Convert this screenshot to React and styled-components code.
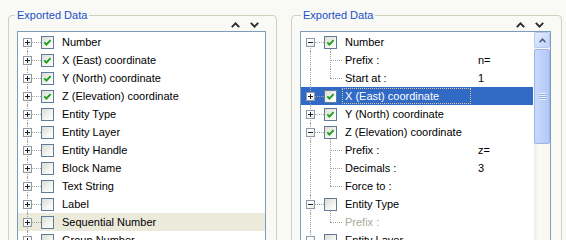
import React from "react";
import styled, { createGlobalStyle } from "styled-components";

// left list: flat, nothing expanded
const leftRows = [
  { label: "Number", checked: true },
  { label: "X (East) coordinate", checked: true },
  { label: "Y (North) coordinate", checked: true },
  { label: "Z (Elevation) coordinate", checked: true },
  { label: "Entity Type" },
  { label: "Entity Layer" },
  { label: "Entity Handle" },
  { label: "Block Name" },
  { label: "Text String" },
  { label: "Label" },
  { label: "Sequential Number", hover: true },
  { label: "Group Number" },
];

// right list: some items opened to show their settings
const rightRows = [
  {
    label: "Number",
    checked: true,
    open: true,
    children: [
      { label: "Prefix :", value: "n=" },
      { label: "Start at :", value: "1" },
    ],
  },
  { label: "X (East) coordinate", checked: true, selected: true },
  { label: "Y (North) coordinate", checked: true },
  {
    label: "Z (Elevation) coordinate",
    checked: true,
    open: true,
    children: [
      { label: "Prefix :", value: "z=" },
      { label: "Decimals :", value: "3" },
      { label: "Force to :", value: "" },
    ],
  },
  {
    label: "Entity Type",
    open: true,
    children: [{ label: "Prefix :", value: "", muted: true }],
  },
  {
    label: "Entity Layer",
    open: true,
    children: [{ label: "Prefix :", value: "", muted: true }],
  },
];

function Chevron({ up }) {
  return (
    <svg width="9" height="6" viewBox="0 0 9 6">
      <polyline
        points={up ? "0.8,5.2 4.5,1.4 8.2,5.2" : "0.8,0.8 4.5,4.6 8.2,0.8"}
        fill="none"
        stroke="#2b2b2b"
        strokeWidth="1.9"
      />
    </svg>
  );
}

function CheckMark() {
  return (
    <svg width="9" height="9" viewBox="0 0 9 9">
      <polyline
        points="1.3,4.3 3.4,6.5 7.6,2.1"
        fill="none"
        stroke="#21a121"
        strokeWidth="1.9"
      />
    </svg>
  );
}

function RootRow({ item, first }) {
  return (
    <Row $selected={item.selected} $hover={item.hover}>
      <Gutter $first={first}>
        <Expander $open={item.open} />
      </Gutter>
      <Check $stem={item.open}>{item.checked && <CheckMark />}</Check>
      <Label $focus={item.selected}>{item.label}</Label>
    </Row>
  );
}

function ChildRow({ item, last }) {
  return (
    <Row $muted={item.muted}>
      <Gutter $pass />
      <SubGutter $last={last} />
      <Label $width={133}>{item.label}</Label>
      <Value>{item.value}</Value>
    </Row>
  );
}

export default function App() {
  return (
    <>
      <GlobalStyle />
      <Page>
        <GroupBox>
          <Legend $shift={-2}>Exported Data</Legend>
          <Arrows>
            <Chevron up />
            <Chevron />
          </Arrows>
          <Tree>
            <Rows>
              {leftRows.map((item, i) => (
                <RootRow key={item.label} item={item} first={i === 0} />
              ))}
            </Rows>
          </Tree>
        </GroupBox>

        <GroupBox>
          <Legend $shift={1}>Exported Data</Legend>
          <Arrows>
            <Chevron up />
            <Chevron />
          </Arrows>
          <Tree>
            <Rows>
              {rightRows.map((item, i) => (
                <React.Fragment key={item.label}>
                  <RootRow item={item} first={i === 0} />
                  {item.open &&
                    item.children.map((c, j) => (
                      <ChildRow
                        key={c.label + j}
                        item={c}
                        last={j === item.children.length - 1}
                      />
                    ))}
                </React.Fragment>
              ))}
            </Rows>
            <ScrollBar>
              <ScrollButton>
                <svg width="7" height="5" viewBox="0 0 7 5">
                  <polyline
                    points="0.6,4.2 3.5,1.2 6.4,4.2"
                    fill="none"
                    stroke="#4d6185"
                    strokeWidth="1.6"
                  />
                </svg>
              </ScrollButton>
              <Thumb>
                <Grip />
              </Thumb>
            </ScrollBar>
          </Tree>
        </GroupBox>
      </Page>
    </>
  );
}

const GlobalStyle = createGlobalStyle`
  html, body {
    margin: 0;
    padding: 0;
    background: #f9f9f6;
  }
  body {
    font-family: "Liberation Sans", Arial, sans-serif;
    font-size: 11px;
    color: #000;
  }
`;

const Page = styled.div`
  display: grid;
  grid-template-columns: 269px 271px;
  column-gap: 14px;
  padding: 8px 0 0 8px;
  height: 240px;
  box-sizing: border-box;
  overflow: hidden;
`;

const GroupBox = styled.fieldset`
  margin: 0;
  min-width: 0;
  height: 270px;
  padding: 0 10px 0 8px;
  border: 1px solid #d0d0bf;
  border-radius: 4px;
`;

const Legend = styled.legend`
  margin-left: ${(p) => p.$shift}px;
  padding: 0 2px;
  line-height: 14px;
  font-size: 11px;
  color: #1850c8;
`;

const Arrows = styled.div`
  display: flex;
  justify-content: flex-end;
  align-items: flex-start;
  gap: 10px;
  height: 9px;
  padding-right: 7px;
`;

const Tree = styled.div`
  display: flex;
  height: 230px;
  border: 1px solid #7f9db9;
  background: #fff;
`;

const Rows = styled.div`
  flex: 1;
  min-width: 0;
  padding-top: 1px;
`;

const Row = styled.div`
  display: flex;
  align-items: center;
  height: 18px;
  white-space: nowrap;
  background: ${(p) =>
    p.$selected ? "#316ac5" : p.$hover ? "#ebeadb" : "transparent"};
  color: ${(p) => (p.$selected ? "#fff" : p.$muted ? "#aca899" : "#000")};
`;

// column holding the +/- box and the dotted lines joining root items
const Gutter = styled.div`
  position: relative;
  align-self: stretch;
  flex: 0 0 23px;
  display: flex;
  align-items: center;
  padding-left: 5px;
  box-sizing: border-box;
  &::before {
    content: "";
    position: absolute;
    left: 9px;
    top: ${(p) => (p.$first ? "9px" : "0")};
    bottom: 0;
    border-left: 1px dotted #a3a3a3;
  }
  &::after {
    content: "";
    display: ${(p) => (p.$pass ? "none" : "block")};
    position: absolute;
    left: 9px;
    right: 0;
    top: 9px;
    border-top: 1px dotted #a3a3a3;
  }
`;

const SubGutter = styled.div`
  position: relative;
  align-self: stretch;
  flex: 0 0 21px;
  &::before {
    content: "";
    position: absolute;
    left: 6px;
    top: 0;
    height: ${(p) => (p.$last ? "9px" : "18px")};
    border-left: 1px dotted #a3a3a3;
  }
  &::after {
    content: "";
    position: absolute;
    left: 6px;
    right: 3px;
    top: 9px;
    border-top: 1px dotted #a3a3a3;
  }
`;

const Expander = styled.span`
  position: relative;
  z-index: 1;
  width: 9px;
  height: 9px;
  box-sizing: border-box;
  border: 1px solid #8c9aa9;
  background: linear-gradient(135deg, #ffffff 40%, #e6e6de);
  &::before {
    content: "";
    position: absolute;
    left: 1px;
    top: 3px;
    width: 5px;
    height: 1px;
    background: #1e1e1e;
  }
  &::after {
    content: "";
    display: ${(p) => (p.$open ? "none" : "block")};
    position: absolute;
    left: 3px;
    top: 1px;
    width: 1px;
    height: 5px;
    background: #1e1e1e;
  }
`;

const Check = styled.span`
  position: relative;
  flex: 0 0 13px;
  height: 13px;
  box-sizing: border-box;
  margin-right: 8px;
  border: 1px solid #5f7d9b;
  background: linear-gradient(135deg, #dcdcd5 0%, #f4f4f0 60%, #ffffff 100%);
  display: flex;
  align-items: center;
  justify-content: center;
  &::after {
    content: "";
    display: ${(p) => (p.$stem ? "block" : "none")};
    position: absolute;
    left: 5px;
    top: 12px;
    height: 3px;
    border-left: 1px dotted #a3a3a3;
  }
`;

const Label = styled.span`
  flex: 0 0 ${(p) => (p.$width ? `${p.$width}px` : "auto")};
  line-height: 14px;
  ${(p) =>
    p.$focus &&
    `
    margin-left: -3px;
    padding: 0 2px;
    width: 129px;
    flex: 0 0 129px;
    box-sizing: border-box;
    height: 16px;
    line-height: 14px;
    border: 1px dotted #d9c99a;
  `}
`;

const Value = styled.span`
  line-height: 14px;
`;

const ScrollBar = styled.div`
  flex: 0 0 16px;
  margin-left: 1px;
  display: flex;
  flex-direction: column;
  background: linear-gradient(90deg, #eeede5, #fbfaf6 30%, #f7f6f1);
`;

const ScrollButton = styled.div`
  height: 16px;
  box-sizing: border-box;
  border: 1px solid #b5c9f2;
  border-radius: 2px;
  background: linear-gradient(135deg, #e3ebfd, #c1d3fb);
  display: flex;
  align-items: center;
  justify-content: center;
`;

const Thumb = styled.div`
  height: 95px;
  margin-top: 1px;
  box-sizing: border-box;
  border: 1px solid #9db5ea;
  border-radius: 2px;
  background: linear-gradient(90deg, #c9d8fc, #bccffa 60%, #b2c8f7);
  display: flex;
  align-items: center;
  justify-content: center;
`;

const Grip = styled.div`
  width: 7px;
  height: 7px;
  background: repeating-linear-gradient(
    180deg,
    #eef3fe 0px,
    #eef3fe 1px,
    #8faee9 1px,
    #8faee9 2px
  );
`;
